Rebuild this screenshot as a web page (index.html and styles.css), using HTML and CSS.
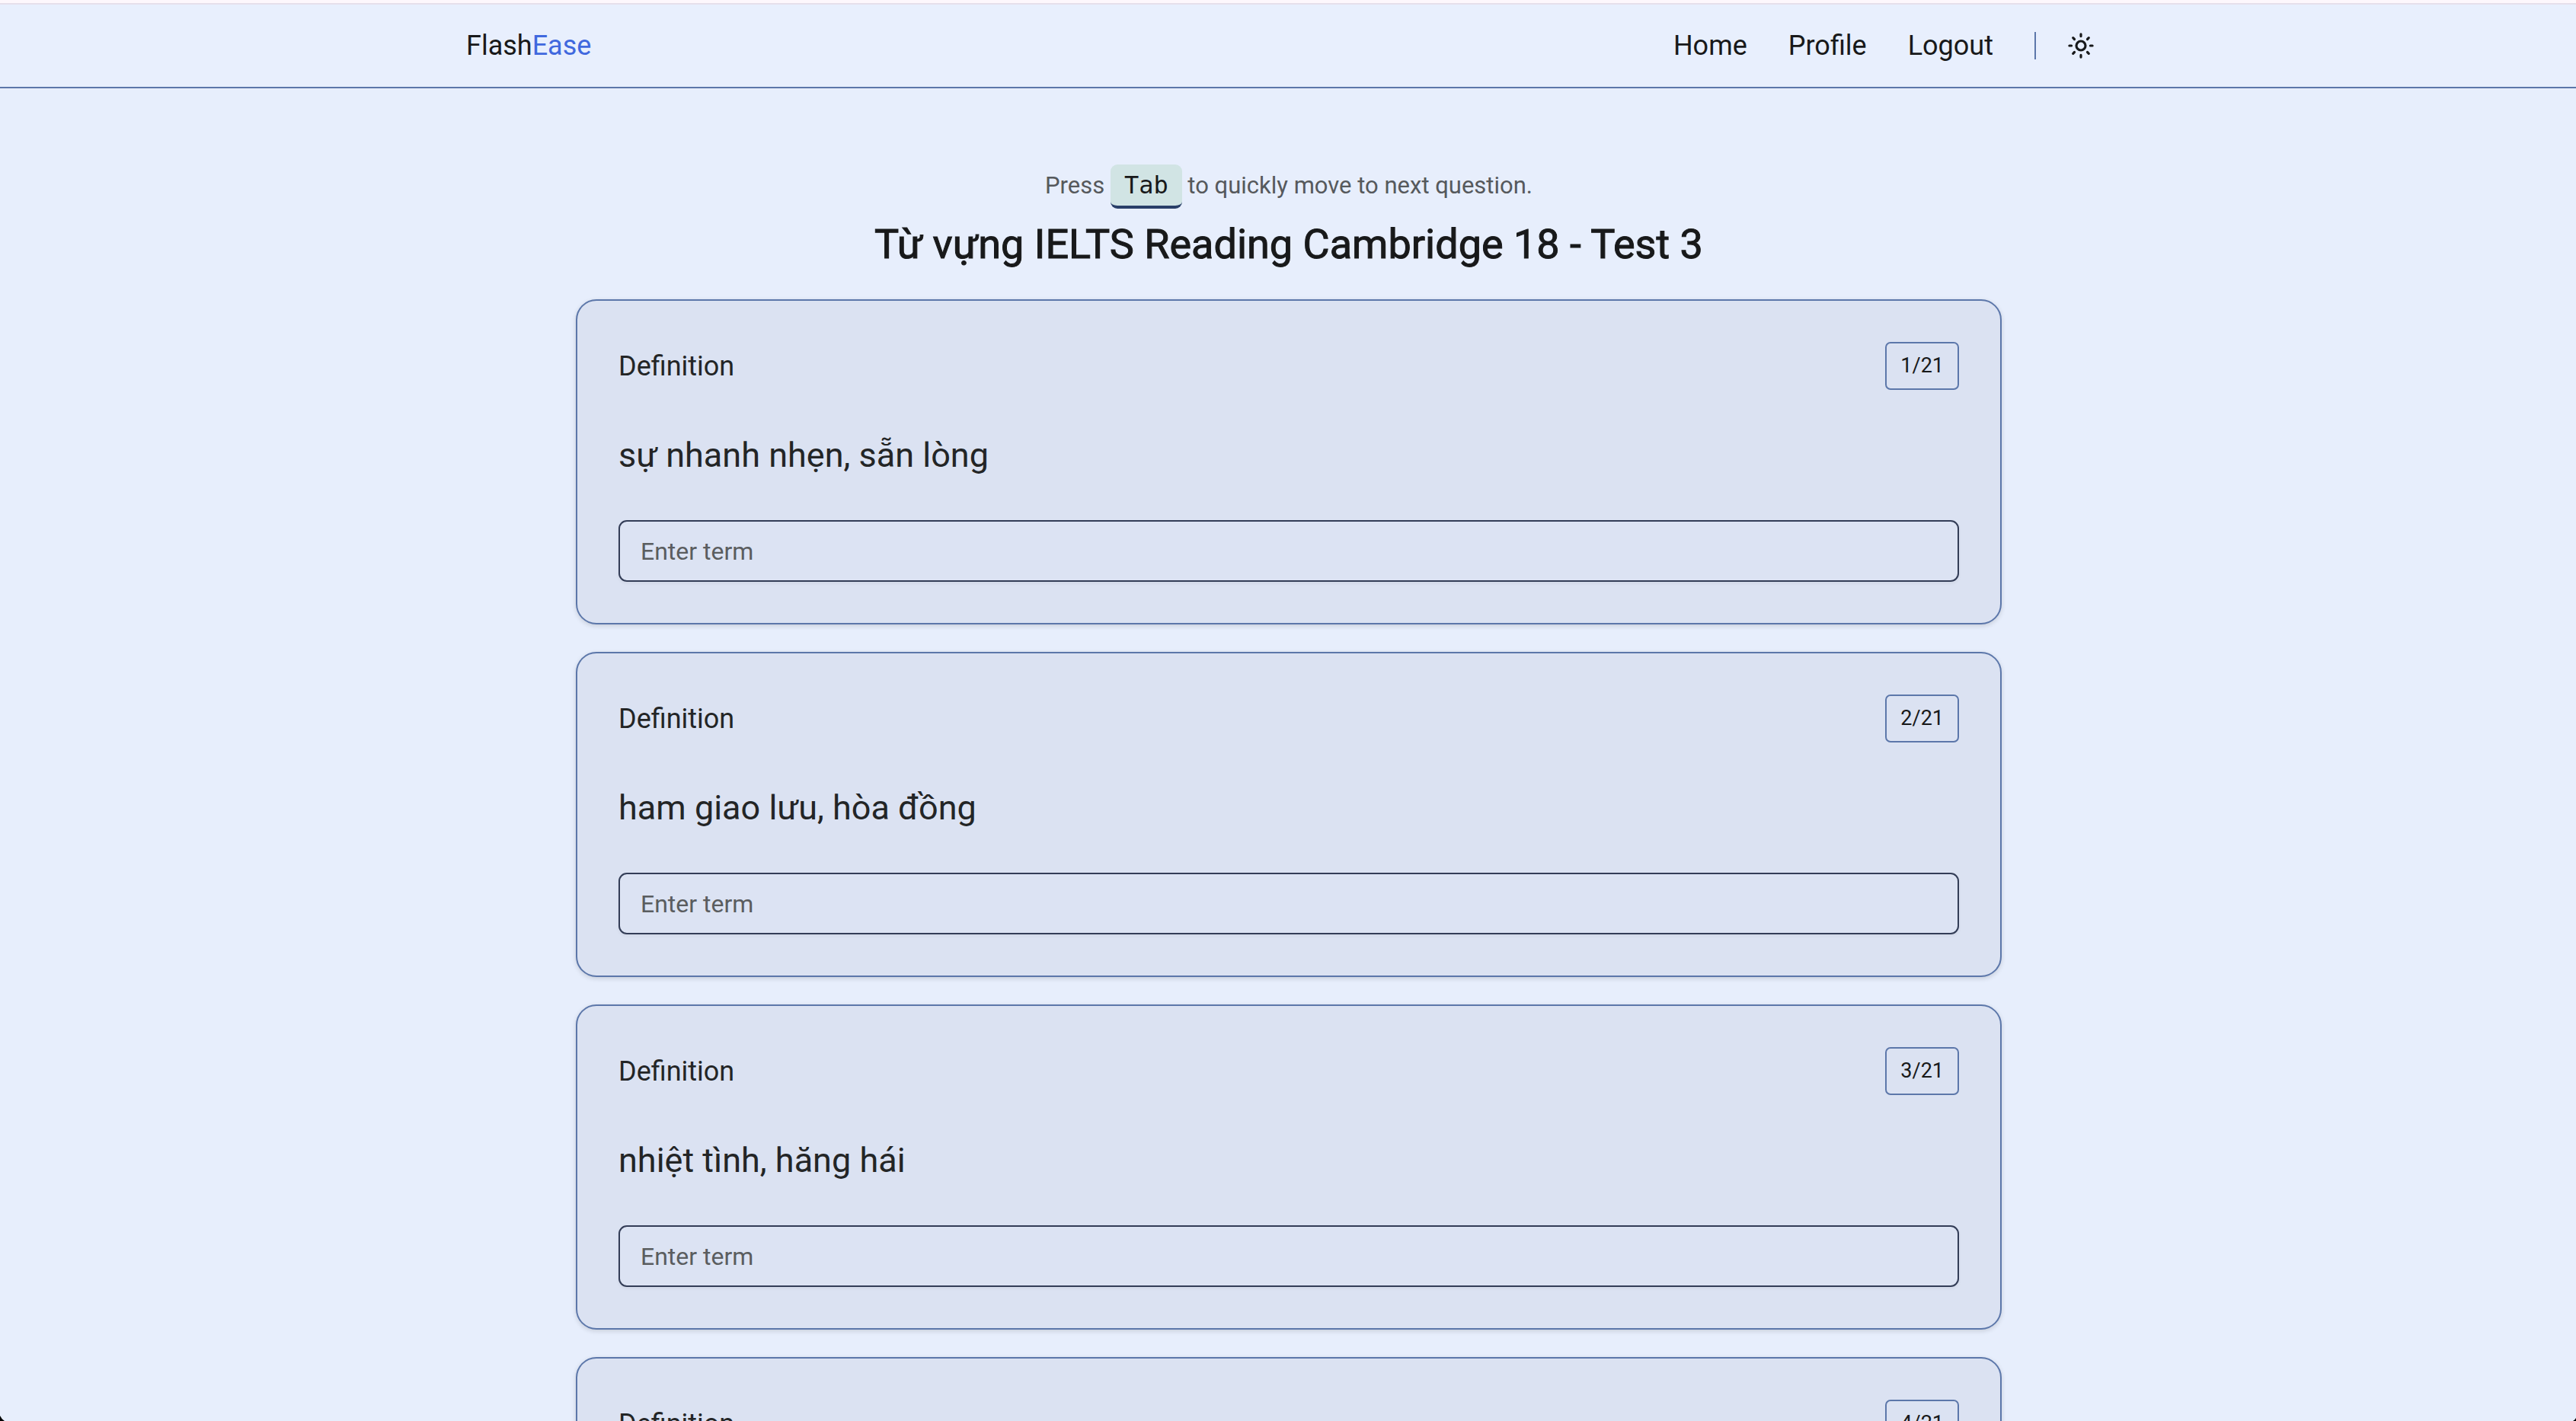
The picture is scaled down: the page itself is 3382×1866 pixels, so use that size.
FILE: index.html
```html
<!DOCTYPE html>
<html lang="vi">
<head>
<meta charset="utf-8">
<meta name="viewport" content="width=device-width, initial-scale=1">
<title>FlashEase</title>
<link rel="stylesheet" href="styles.css">
</head>
<body>
<header class="site-header">
  <div class="site-header__inner">
    <a class="logo" href="#">Flash<span class="logo__accent">Ease</span></a>
    <nav class="nav">
      <a class="nav__link" href="#">Home</a>
      <a class="nav__link" href="#">Profile</a>
      <a class="nav__link" href="#">Logout</a>
      <span class="nav__divider"></span>
      <button class="theme-toggle" type="button" aria-label="Toggle theme">
        <svg class="theme-toggle__icon" viewBox="0 0 36 36" fill="none" stroke="currentColor" stroke-width="3.200" stroke-linecap="round">
          <circle cx="18" cy="18" r="6"/>
          <path d="M18 2.900v2.700M18 30.400v2.700M2.900 18h2.700M30.400 18h2.700M7.700 7.700l1.800 1.800M26.500 26.500l1.800 1.800M7.700 28.300l1.800-1.800M26.500 9.500l1.800-1.800"/>
        </svg>
      </button>
    </nav>
  </div>
</header>
<main class="quiz">
  <p class="hint">Press <kbd class="key">Tab</kbd> to quickly move to next question.</p>
  <h1 class="quiz__title">Từ vựng IELTS Reading Cambridge 18 - Test 3</h1>
  <div class="cards">
    <section class="card">
      <div class="card__head"><span>Definition</span><span class="badge">1/21</span></div>
      <label class="card__term" for="term-1">sự nhanh nhẹn, sẵn lòng</label>
      <input class="card__input" id="term-1" type="text" placeholder="Enter term">
    </section>
    <section class="card">
      <div class="card__head"><span>Definition</span><span class="badge">2/21</span></div>
      <label class="card__term" for="term-2">ham giao lưu, hòa đồng</label>
      <input class="card__input" id="term-2" type="text" placeholder="Enter term">
    </section>
    <section class="card">
      <div class="card__head"><span>Definition</span><span class="badge">3/21</span></div>
      <label class="card__term" for="term-3">nhiệt tình, hăng hái</label>
      <input class="card__input" id="term-3" type="text" placeholder="Enter term">
    </section>
    <section class="card">
      <div class="card__head"><span>Definition</span><span class="badge">4/21</span></div>
    </section>
  </div>
</main>
</body>
</html>
```
FILE: styles.css
```css
* {
  box-sizing: border-box;
}

body {
  height: 100vh;
  margin: 0;
  overflow: hidden;
  border-top: 4px solid #fdf7fc;
  background: #e7eefc;
  color: #18191a;
  font: 36px/54px Roboto, "Noto Sans", sans-serif;
}

/* rounded window corners */
body::before,
body::after {
  content: "";
  position: fixed;
  bottom: 0;
  width: 6px;
  height: 7px;
  background: #000;
}

body::before {
  left: 0;
  clip-path: polygon(0 0, 45% 60%, 100% 100%, 0 100%);
}

body::after {
  right: 0;
  width: 4px;
  height: 4px;
  clip-path: polygon(100% 0, 55% 60%, 0 100%, 100% 100%);
}

a {
  color: inherit;
  text-decoration: none;
}

.site-header {
  border-top: 2px solid #e6dfeb;
  border-bottom: 2px solid #5c77aa;
  background: #e8effd;
}

.site-header__inner {
  display: flex;
  align-items: center;
  justify-content: space-between;
  max-width: 2162px;
  height: 108px;
  margin: 0 auto;
  padding-left: 2px;
}

.logo__accent {
  color: #4068de;
}

.nav {
  display: flex;
  align-items: center;
  gap: 54px;
}

.nav__divider {
  width: 2px;
  height: 36px;
  background: #5c77aa;
}

.theme-toggle {
  display: flex;
  margin-left: -35px;
  padding: 22px;
  border: 0;
  background: none;
  color: inherit;
}

.theme-toggle__icon {
  width: 36px;
  height: 36px;
}

.quiz {
  max-width: 1874px;
  margin: 0 auto;
  padding: 96px 0 0 2px;
}

.hint {
  margin: 0;
  color: #56595c;
  font-size: 31px;
  line-height: 64px;
  text-align: center;
}

.key {
  display: inline-block;
  padding: 4px 18px;
  border-bottom: 4px solid #293f68;
  border-radius: 9px;
  background: #d1e4e4;
  color: #18191a;
  font: 32px/50px "DejaVu Sans Mono", monospace;
  line-height: 46px;
}

.quiz__title {
  margin: 9px 0 36px;
  font-size: 54px;
  font-weight: 400;
  -webkit-text-stroke: 1px currentColor;
  line-height: 72px;
  text-align: center;
}

.cards {
  display: grid;
  gap: 36px;
}

.card {
  display: flex;
  flex-direction: column;
  padding: 54px;
  border: 2px solid #5c77aa;
  border-radius: 27px;
  background: #dbe2f2;
  color: #232526;
  box-shadow: 0 2px 6px rgb(0 0 0 / 14%);
}

.card__head {
  display: flex;
  align-items: center;
  justify-content: space-between;
}

.badge {
  padding: 7px 18px;
  border: 2px solid #5c77aa;
  border-radius: 7px;
  color: #18191a;
  font-size: 27px;
  line-height: 45px;
}

.card__term {
  padding: 54px 0;
  font-size: 45px;
  line-height: 63px;
}

.card__input {
  width: 100%;
  height: 81px;
  padding: 0 27px;
  border: 2px solid #333d57;
  border-radius: 11px;
  background: #dce3f3;
  color: inherit;
  font: inherit;
  font-size: 32px;
  box-shadow: 0 2px 4px rgb(0 0 0 / 5%);
}

.card__input::placeholder {
  color: #5a5d5f;
  opacity: 1;
}
```
